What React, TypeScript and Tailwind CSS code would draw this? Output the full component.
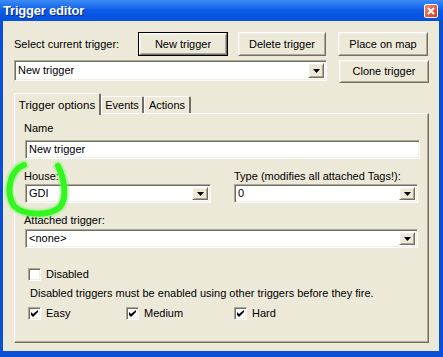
import React from 'react';

const font = "font-['Tahoma','Liberation_Sans',sans-serif]";

// classic win32 3d edges
const sunken =
  'border border-t-[#aca899] border-l-[#aca899] border-r-white border-b-white shadow-[inset_1px_1px_0_#716f64,inset_-1px_-1px_0_#f1efe2]';
const raised =
  'border border-t-white border-l-white border-r-[#716f64] border-b-[#716f64] shadow-[inset_1px_1px_0_#f1efe2,inset_-1px_-1px_0_#aca899]';

function Button({ label, className = '', isDefault = false }: { label: string; className?: string; isDefault?: boolean }) {
  if (isDefault) {
    return (
      <div className={`border border-black bg-[#ece9d8] ${className}`}>
        <div className={`w-full h-full flex items-center justify-center ${raised}`}>{label}</div>
      </div>
    );
  }
  return <div className={`flex items-center justify-center bg-[#ece9d8] ${raised} ${className}`}>{label}</div>;
}

function DropArrow() {
  return (
    <div className={`w-[16px] h-full flex items-center justify-center bg-[#ece9d8] ${raised}`}>
      <svg width="7" height="4" viewBox="0 0 7 4">
        <path d="M0 0h7L3.5 4z" fill="#000" />
      </svg>
    </div>
  );
}

function Combo({ value, className = '' }: { value: string; className?: string }) {
  return (
    <div className={`flex bg-white p-[2px] ${sunken} ${className}`}>
      <div className="flex-1 flex items-center pl-[1px]">{value}</div>
      <DropArrow />
    </div>
  );
}

function Check({ label, checked, className = '' }: { label: string; checked: boolean; className?: string }) {
  return (
    <div className={`flex items-center h-[13px] ${className}`}>
      <div className={`w-[13px] h-[13px] bg-white flex items-center justify-center ${sunken}`}>
        {checked && (
          <svg width="7" height="7" viewBox="0 0 7 7">
            <path d="M0 2v3l2 2 5-5V0L2 4z" fill="#000" />
          </svg>
        )}
      </div>
      <span className="ml-[5px] leading-[13px]">{label}</span>
    </div>
  );
}

function Tab({ label, active = false, width }: { label: string; active?: boolean; width: string }) {
  if (active) {
    return (
      <div
        className={`${width} h-[22px] -mb-[2px] relative z-10 bg-[#ece9d8] border-t border-l border-white border-r-2 border-r-[#716f64] rounded-t-[2px] flex items-start justify-center pt-[3px] text-[11.5px]`}
      >
        {label}
      </div>
    );
  }
  return (
    <div
      className={`${width} h-[17px] mt-[3px] bg-[#ece9d8] border-t border-l border-white border-r-2 border-r-[#716f64] rounded-t-[2px] flex items-center justify-center`}
    >
      {label}
    </div>
  );
}

export default function App() {
  return (
    <div className={`relative w-[443px] h-[357px] bg-[#0a4fd8] flex flex-col text-[11px] text-black ${font}`}>
      {/* title bar */}
      <div className="h-[21px] flex items-center justify-between pl-[3px] pr-[5px] bg-gradient-to-b from-[#3c8cf7] via-[#0a5ae6] to-[#0550de]">
        <span className="text-white font-bold text-[13px] font-['Liberation_Sans',sans-serif] tracking-[-0.2px] [text-shadow:1px_1px_0_#0a2a8a]">
          Trigger editor
        </span>
        <div className="w-[14px] h-[14px] rounded-[2px] border border-white bg-gradient-to-br from-[#f08a6e] to-[#d2381a] flex items-center justify-center">
          <svg width="8" height="8" viewBox="0 0 8 8">
            <path d="M1 1l6 6M7 1L1 7" stroke="#fff" strokeWidth="1.8" />
          </svg>
        </div>
      </div>

      {/* client area */}
      <div className="flex-1 ml-[3px] mr-[4px] mb-[6px] bg-[#ece9d8] pl-[11px] pr-[10px] pt-[11px] flex flex-col">
        <div className="flex items-center h-[24px]">
          <span className="w-[124px]">Select current trigger:</span>
          <Button label="New trigger" isDefault className="w-[90px] h-[24px]" />
          <Button label="Delete trigger" className="w-[88px] h-[24px] ml-[10px]" />
          <Button label="Place on map" className="w-[90px] h-[24px] ml-[12px]" />
        </div>

        <div className="flex items-start mt-[4px]">
          <Combo value="New trigger" className="w-[313px] h-[21px]" />
          <Button label="Clone trigger" className="w-[90px] h-[23px] ml-[12px]" />
        </div>

        <div className="flex mt-[10px] h-[20px] items-start">
          <Tab label="Trigger options" active width="w-[87px]" />
          <Tab label="Events" width="w-[43px]" />
          <Tab label="Actions" width="w-[47px]" />
        </div>

        <div className="w-[415px] h-[230px] border-t border-l border-white border-r border-b border-r-[#716f64] border-b-[#716f64] shadow-[inset_-1px_-1px_0_#aca899] px-[9px] pt-[8px] flex flex-col">
          <div className="h-[13px] leading-[13px]">Name</div>
          <div className={`w-[395px] h-[19px] mt-[5px] ml-[1px] bg-white flex items-center pl-[3px] ${sunken}`}>New trigger</div>

          <div className="flex mt-[11px] ml-[1px]">
            <div className="w-[186px] flex flex-col">
              <div className="h-[13px] leading-[13px] -ml-[1px]">House:</div>
              <Combo value="GDI" className="h-[19px] mt-[1px]" />
            </div>
            <div className="w-[184px] ml-[23px] flex flex-col">
              <div className="h-[13px] leading-[13px]">Type (modifies all attached Tags!):</div>
              <Combo value="0" className="h-[19px] mt-[1px]" />
            </div>
          </div>

          <div className="h-[13px] leading-[13px] mt-[11px]">Attached trigger:</div>
          <Combo value="<none>" className="w-[393px] h-[19px] mt-[2px] ml-[1px]" />

          <Check label="Disabled" checked={false} className="mt-[20px] ml-[4px]" />
          <div className="h-[13px] leading-[13px] mt-[6px] ml-[6px]">
            Disabled triggers must be enabled using other triggers before they fire.
          </div>
          <div className="flex mt-[7px] ml-[4px]">
            <Check label="Easy" checked className="w-[98px]" />
            <Check label="Medium" checked className="w-[108px]" />
            <Check label="Hard" checked />
          </div>
        </div>
      </div>

      {/* green marker annotation drawn over the dialog */}
      <svg className="absolute left-0 top-0 pointer-events-none" width="443" height="357">
        <path
          d="M24 165 C10 170 5 192 14 206 C24 216 50 216 60 207 C67 198 65 180 58 166"
          fill="none"
          stroke="#5cff4a"
          strokeWidth="10"
          strokeLinecap="round"
          opacity="0.35"
        />
        <path
          d="M24 165 C10 170 5 192 14 206 C24 216 50 216 60 207 C67 198 65 180 58 166"
          fill="none"
          stroke="#33f51f"
          strokeWidth="6"
          strokeLinecap="round"
        />
      </svg>
    </div>
  );
}
